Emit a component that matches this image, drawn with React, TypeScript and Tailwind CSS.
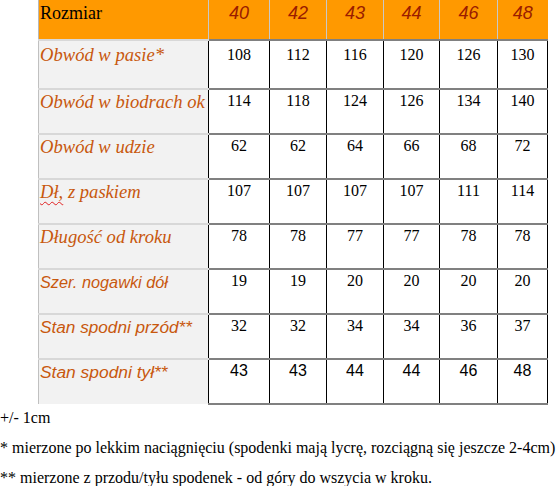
import React from "react";

const sizes = ["40", "42", "43", "44", "46", "48"];
const colW = ["w-[61px]", "w-[57px]", "w-[57px]", "w-[56px]", "w-[58px]", "w-[50px]"];

type Row = { label: React.ReactNode; font: string; sansNums?: boolean; vals: string[]; h: string };

const serifLabel = "font-['Liberation_Serif',serif] text-[18.6px]";

const rows: Row[] = [
  { label: "Obwód w pasie*", font: serifLabel, vals: ["108", "112", "116", "120", "126", "130"], h: "h-[49px]" },
  { label: "Obwód w biodrach ok", font: serifLabel, vals: ["114", "118", "124", "126", "134", "140"], h: "h-[45px]" },
  { label: "Obwód w udzie", font: serifLabel, vals: ["62", "62", "64", "66", "68", "72"], h: "h-[45px]" },
  {
    label: (
      <>
        <span className="underline decoration-wavy decoration-[#e02020] decoration-1 underline-offset-[3px]">Dł,</span> z paskiem
      </>
    ),
    font: serifLabel,
    vals: ["107", "107", "107", "107", "111", "114"],
    h: "h-[45px]",
  },
  { label: "Długość od kroku", font: serifLabel, vals: ["78", "78", "77", "77", "78", "78"], h: "h-[45px]" },
  { label: "Szer. nogawki dół", font: "font-['Liberation_Sans',sans-serif] text-[16.3px]", vals: ["19", "19", "20", "20", "20", "20"], h: "h-[45px]" },
  { label: "Stan spodni przód**", font: "font-['Liberation_Sans',sans-serif] text-[17.2px]", vals: ["32", "32", "34", "34", "36", "37"], h: "h-[45px]" },
  { label: "Stan spodni tył**", font: "font-['Liberation_Sans',sans-serif] text-[17.4px]", sansNums: true, vals: ["43", "43", "44", "44", "46", "48"], h: "h-[45px]" },
];

export default function App() {
  return (
    <div className="w-[556px] h-[486px] bg-white overflow-hidden font-['Liberation_Serif',serif] text-black">
      <div className="pl-[38px]">
        <table className="border-collapse table-fixed w-[509px]">
          <tbody>
            <tr className="h-[40px] bg-[#ff9900]">
              <td className="w-[170px] align-top px-[1px] pt-[1px] text-[18px] leading-[24px] border-l border-[#b8b8b8]">Rozmiar</td>
              {sizes.map((s, i) => (
                <td
                  key={s}
                  className={`${colW[i]} align-top text-center pt-[1px] text-[18px] leading-[24px] italic text-[#9a1c00] font-['Liberation_Sans',sans-serif] border-l border-[#c8c8c8]`}
                >
                  {s}
                </td>
              ))}
            </tr>
            {rows.map((r, ri) => (
              <tr key={ri} className={r.h}>
                <td
                  className={`align-top bg-[#f2f2f2] px-[1px] ${ri === 0 ? "pt-[3px]" : "pt-[1px]"} leading-[22px] italic text-[#c8580e] whitespace-nowrap border-l border-l-[#c0c0c0] border-t-2 border-t-[#d8d8d8] ${r.font}`}
                >
                  {r.label}
                </td>
                {r.vals.map((v, i) => (
                  <td
                    key={i}
                    className={`align-top text-center ${ri === 0 ? "pt-[4px]" : "pt-[1px]"} text-[16px] leading-[20px] border-x border-x-black border-t-2 border-t-[#808080] ${
                      ri === rows.length - 1 ? "border-b-2 border-b-[#808080]" : ""
                    } ${r.sansNums ? "font-['Liberation_Sans',sans-serif]" : ""}`}
                  >
                    {v}
                  </td>
                ))}
              </tr>
            ))}
          </tbody>
        </table>
      </div>
      <div className="text-[16px] leading-[20px] pt-[3px] flex flex-col gap-[10px] whitespace-nowrap">
        <p>+/- 1cm</p>
        <p>* mierzone po lekkim naciągnięciu (spodenki mają lycrę, rozciągną się jeszcze 2-4cm)</p>
        <p>** mierzone z przodu/tyłu spodenek - od góry do wszycia w kroku.</p>
      </div>
    </div>
  );
}
